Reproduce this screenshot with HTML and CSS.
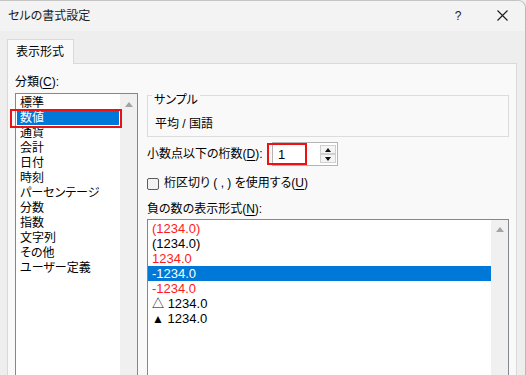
FILE: index.html
```html
<!DOCTYPE html>
<html lang="ja">
<head>
<meta charset="utf-8">
<title>セルの書式設定</title>
<link rel="stylesheet" href="styles.css">
</head>
<body>
<div class="window">
  <div class="titlebar">
    <span class="title">セルの書式設定</span>
    <span class="help">?</span>
    <span class="close">
      <svg width="11" height="11" viewBox="0 0 11 11"><path d="M0.5 0.5 L10.5 10.5 M10.5 0.5 L0.5 10.5" stroke="#1a1a1a" stroke-width="1.1" fill="none"/></svg>
    </span>
  </div>
  <div class="client">
    <div class="tabs"><div class="tab">表示形式</div></div>
    <div class="panel">
      <div class="col-left">
        <div class="label">分類(<u>C</u>):</div>
        <div class="listbox cat">
          <ul class="items">
            <li>標準</li>
            <li class="sel">数値</li>
            <li>通貨</li>
            <li>会計</li>
            <li>日付</li>
            <li>時刻</li>
            <li>パーセンテージ</li>
            <li>分数</li>
            <li>指数</li>
            <li>文字列</li>
            <li>その他</li>
            <li>ユーザー定義</li>
          </ul>
          <div class="scrollbar"><span class="arrow"></span></div>
          <div class="annot annot-cat"></div>
        </div>
      </div>
      <div class="col-right">
        <div class="group">
          <div class="group-title">サンプル</div>
          <div class="sample">平均 / 国語</div>
        </div>
        <div class="row-decimals">
          <span class="dec-label">小数点以下の桁数(<u>D</u>):</span>
          <div class="spin">
            <span class="spin-value">1</span>
            <div class="spin-btns">
              <span class="spin-btn"><span class="tri-up"></span></span>
              <span class="spin-btn"><span class="tri-down"></span></span>
            </div>
            <div class="annot annot-spin"></div>
          </div>
        </div>
        <div class="check"><span class="box"></span><span>桁区切り ( , ) を使用する(<u>U</u>)</span></div>
        <div class="label neg-label">負の数の表示形式(<u>N</u>):</div>
        <div class="listbox neg">
          <ul class="items">
            <li class="red">(1234.0)</li>
            <li>(1234.0)</li>
            <li class="red">1234.0</li>
            <li class="sel">-1234.0</li>
            <li class="red">-1234.0</li>
            <li><span class="mark">△</span> 1234.0</li>
            <li><span class="mark">▲</span> 1234.0</li>
          </ul>
          <div class="scrollbar"><span class="arrow"></span></div>
        </div>
      </div>
    </div>
  </div>
</div>
</body>
</html>
```
FILE: styles.css
```css
* { box-sizing: border-box; }
html, body {
  margin: 0;
  padding: 0;
  width: 526px;
  height: 375px;
  overflow: hidden;
  background: #eeeeee;
}
body {
  font-family: "Liberation Sans", "Noto Sans CJK JP", sans-serif;
  font-size: 12px;
  color: #000;
  font-feature-settings: "palt";
}
.window {
  width: 526px;
  height: 375px;
  border-top: 1px solid #c4c4c4;
  border-right: 1px solid #b8b8b8;
  border-top-right-radius: 8px;
  overflow: hidden;
  display: flex;
  flex-direction: column;
  background: #eeeeee;
}
.titlebar {
  height: 30px;
  flex: none;
  display: flex;
  align-items: center;
  background: #f3f3f3;
  padding-left: 8px;
}
.title {
  line-height: 15px;
  color: #1a1a1a;
}
.help {
  margin-left: auto;
  width: 30px;
  margin-right: 6px;
  text-align: center;
  line-height: 15px;
  color: #1a1a1a;
}
.close {
  width: 46px;
  height: 30px;
  display: flex;
  align-items: center;
  justify-content: center;
  margin-top: -1px;
}
.client {
  flex: 1;
  padding: 8px 8px 0 7px;
  display: flex;
  flex-direction: column;
  background: #eeeeee;
}
.tabs {
  display: flex;
  height: 24px;
  flex: none;
}
.tab {
  position: relative;
  z-index: 1;
  height: 25px;
  width: 67px;
  border: 1px solid #d9d9d9;
  border-bottom: none;
  background: #f9f9f9;
  padding-left: 8px;
  padding-top: 1px;
  line-height: 22px;
}
.panel {
  flex: 1;
  border: 1px solid #d9d9d9;
  background: #f9f9f9;
  padding: 10px 7px 0 7px;
  display: flex;
  gap: 9px;
  min-height: 0;
}
.label {
  line-height: 15px;
  height: 15px;
  padding-top: 1px;
}
.col-left {
  width: 123px;
  flex: none;
  display: flex;
  flex-direction: column;
}
.col-right {
  width: 362px;
  flex: none;
  display: flex;
  flex-direction: column;
}
.listbox {
  position: relative;
  border: 1px solid #828790;
  background: #fff;
  display: flex;
  height: 320px;
  flex: none;
}
.cat { margin-top: 4px; }
.items {
  list-style: none;
  margin: 0;
  padding: 1px 1px 0 1px;
  flex: 1;
}
.items li {
  height: 15px;
  line-height: 14px;
  padding-top: 1px;
  padding-left: 3px;
  white-space: nowrap;
}
.items li.sel {
  background: #0078d7;
  color: #fff;
}
.neg .items { padding: 1px 0 0 0; }
.neg .items li {
  padding-left: 4px;
  font-size: 13px;
}
.neg .mark { font-size: 12px; }
.items li.red { color: #ff1a1a; }
.scrollbar {
  width: 17px;
  flex: none;
  background: #f0f0f0;
  display: flex;
  justify-content: center;
}
.arrow {
  margin-top: 8px;
  width: 0;
  height: 0;
  border-left: 4.5px solid transparent;
  border-right: 4.5px solid transparent;
  border-bottom: 5px solid #a3a3a3;
}
.neg .arrow { margin-top: 7px; }
.annot {
  position: absolute;
  border: 2px solid #ee1111;
  pointer-events: none;
}
.annot-cat {
  left: -6px;
  top: 15px;
  width: 112px;
  height: 19px;
}
.group {
  margin-top: 21px;
  border: 1px solid #dcdcdc;
  padding: 0 0 4px 7px;
  height: 42px;
}
.group-title {
  width: fit-content;
  margin-top: -4px;
  margin-left: -3px;
  padding: 1px 2px 0 2px;
  background: #f9f9f9;
  line-height: 14px;
  height: 15px;
}
.sample {
  margin-top: 10px;
  line-height: 14px;
}
.row-decimals {
  display: flex;
  align-items: center;
  height: 24px;
  margin-top: 5px;
}
.dec-label {
  width: 125px;
  flex: none;
  line-height: 15px;
  padding-top: 1px;
}
.spin {
  position: relative;
  width: 66px;
  height: 24px;
  border: 1px solid #b4b4b4;
  background: #fff;
  display: flex;
  align-items: center;
}
.spin-value {
  flex: 1;
  padding-left: 5px;
  line-height: 15px;
  font-size: 13px;
}
.spin-btns {
  width: 17px;
  align-self: stretch;
  display: flex;
  flex-direction: column;
  padding: 2px 1px 2px 0;
}
.spin-btn {
  flex: 1;
  border: 1px solid #cfcfcf;
  background: #f4f4f4;
  display: flex;
  align-items: center;
  justify-content: center;
}
.tri-up {
  width: 0; height: 0;
  border-left: 3.5px solid transparent;
  border-right: 3.5px solid transparent;
  border-bottom: 4px solid #111;
}
.tri-down {
  width: 0; height: 0;
  border-left: 3.5px solid transparent;
  border-right: 3.5px solid transparent;
  border-top: 4px solid #111;
}
.annot-spin {
  left: -6px;
  top: 0;
  width: 40px;
  height: 22px;
}
.check {
  display: flex;
  align-items: center;
  height: 15px;
  line-height: 15px;
  margin-top: 10px;
}
.box {
  width: 12px;
  height: 12px;
  border: 1px solid #5c5c5c;
  border-radius: 2px;
  background: #f3f3f3;
  margin-right: 5px;
  flex: none;
}
.neg-label { margin-top: 10px; }
.neg { margin-top: 3px; }
u { text-decoration-thickness: 1px; text-underline-offset: 2px; }
```
